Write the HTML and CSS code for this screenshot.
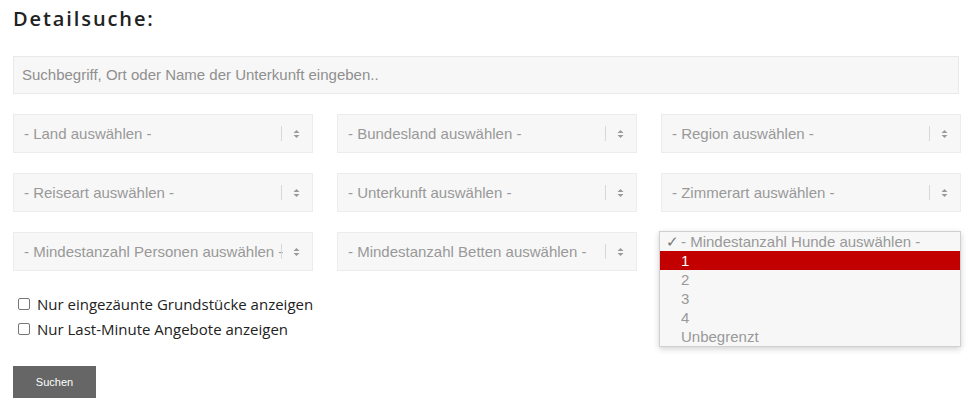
FILE: index.html
```html
<!DOCTYPE html>
<html lang="de">
<head>
<meta charset="utf-8">
<title>Detailsuche</title>
<link rel="stylesheet" href="styles.css">
</head>
<body>
<div class="page">
  <h2 class="title">Detailsuche:</h2>
  <div class="search">Suchbegriff, Ort oder Name der Unterkunft eingeben..</div>
  <div class="grid">
    <div class="sel"><span class="lbl">- Land auswählen -</span><span class="arrow"><i class="sep"></i><svg width="7" height="10" viewBox="0 0 7 10"><path d="M0.5 4 L3.5 1 L6.5 4 Z M0.5 6 L3.5 9 L6.5 6 Z" fill="#9a9a9a"/></svg></span></div>
    <div class="sel"><span class="lbl">- Bundesland auswählen -</span><span class="arrow"><i class="sep"></i><svg width="7" height="10" viewBox="0 0 7 10"><path d="M0.5 4 L3.5 1 L6.5 4 Z M0.5 6 L3.5 9 L6.5 6 Z" fill="#9a9a9a"/></svg></span></div>
    <div class="sel"><span class="lbl">- Region auswählen -</span><span class="arrow"><i class="sep"></i><svg width="7" height="10" viewBox="0 0 7 10"><path d="M0.5 4 L3.5 1 L6.5 4 Z M0.5 6 L3.5 9 L6.5 6 Z" fill="#9a9a9a"/></svg></span></div>
    <div class="sel"><span class="lbl">- Reiseart auswählen -</span><span class="arrow"><i class="sep"></i><svg width="7" height="10" viewBox="0 0 7 10"><path d="M0.5 4 L3.5 1 L6.5 4 Z M0.5 6 L3.5 9 L6.5 6 Z" fill="#9a9a9a"/></svg></span></div>
    <div class="sel"><span class="lbl">- Unterkunft auswählen -</span><span class="arrow"><i class="sep"></i><svg width="7" height="10" viewBox="0 0 7 10"><path d="M0.5 4 L3.5 1 L6.5 4 Z M0.5 6 L3.5 9 L6.5 6 Z" fill="#9a9a9a"/></svg></span></div>
    <div class="sel"><span class="lbl">- Zimmerart auswählen -</span><span class="arrow"><i class="sep"></i><svg width="7" height="10" viewBox="0 0 7 10"><path d="M0.5 4 L3.5 1 L6.5 4 Z M0.5 6 L3.5 9 L6.5 6 Z" fill="#9a9a9a"/></svg></span></div>
    <div class="sel"><span class="lbl">- Mindestanzahl Personen auswählen -</span><span class="arrow"><i class="sep"></i><svg width="7" height="10" viewBox="0 0 7 10"><path d="M0.5 4 L3.5 1 L6.5 4 Z M0.5 6 L3.5 9 L6.5 6 Z" fill="#9a9a9a"/></svg></span></div>
    <div class="sel"><span class="lbl">- Mindestanzahl Betten auswählen -</span><span class="arrow"><i class="sep"></i><svg width="7" height="10" viewBox="0 0 7 10"><path d="M0.5 4 L3.5 1 L6.5 4 Z M0.5 6 L3.5 9 L6.5 6 Z" fill="#9a9a9a"/></svg></span></div>
    <div class="sel open">
      <span class="lbl hidden">- Mindestanzahl Hunde auswählen -</span>
      <ul class="menu">
        <li class="opt checked"><span class="chk">✓</span>- Mindestanzahl Hunde auswählen -</li>
        <li class="opt active">1</li>
        <li class="opt">2</li>
        <li class="opt">3</li>
        <li class="opt">4</li>
        <li class="opt">Unbegrenzt</li>
      </ul>
    </div>
  </div>
  <div class="checks">
    <label class="check"><span class="box"></span>Nur eingezäunte Grundstücke anzeigen</label>
    <label class="check"><span class="box"></span>Nur Last-Minute Angebote anzeigen</label>
  </div>
  <button class="btn">Suchen</button>
</div>
</body>
</html>
```
FILE: styles.css
```css
html, body {
  margin: 0;
  padding: 0;
  background: #fff;
}
.page {
  padding: 0 12px 0 13px;
  font-family: "Open Sans", sans-serif;
}
.title {
  margin: 0;
  padding-top: 4px;
  height: 52px;
  font-family: "Open Sans", sans-serif;
  font-weight: 600;
  font-size: 20px;
  letter-spacing: 1.9px;
  color: #222;
  line-height: 30px;
}
.search {
  box-sizing: border-box;
  width: 946px;
  height: 38px;
  background: #f7f7f7;
  border: 1px solid #e9e9e9;
  padding-left: 8px;
  font-family: "Liberation Sans", Arial, sans-serif;
  font-size: 15px;
  line-height: 36px;
  color: #8f8f8f;
}
.grid {
  margin-top: 20px;
  display: grid;
  grid-template-columns: 300px 300px 300px;
  column-gap: 24px;
  row-gap: 20px;
}
.sel {
  position: relative;
  box-sizing: border-box;
  height: 39px;
  background: #f7f7f7;
  border: 1px solid #ececec;
  display: flex;
  align-items: center;
  padding-left: 10px;
  padding-right: 12px;
  font-family: "Liberation Sans", Arial, sans-serif;
  font-size: 15px;
  color: #999;
}
.lbl {
  flex: 1;
  min-width: 0;
  white-space: nowrap;
  overflow: hidden;
}
.lbl.hidden {
  visibility: hidden;
}
.arrow {
  position: absolute;
  right: 12px;
  top: 0;
  bottom: 0;
  display: flex;
  align-items: center;
}
.sep {
  display: block;
  width: 1px;
  height: 15px;
  background: #d8d8d8;
  margin-right: 11px;
}
.menu {
  position: absolute;
  left: -3px;
  top: -2px;
  width: 302px;
  box-sizing: border-box;
  margin: 0;
  padding: 0;
  list-style: none;
  background: #f7f7f7;
  border: 1px solid #d0d0d0;
  box-shadow: 0 2px 6px rgba(0,0,0,0.18);
  z-index: 5;
}
.opt {
  height: 19px;
  line-height: 19px;
  padding-left: 21px;
  position: relative;
  font-family: "Liberation Sans", Arial, sans-serif;
  font-size: 15px;
  color: #999;
}
.opt.active {
  background: #c20000;
  color: #fff;
}
.chk {
  position: absolute;
  left: 6px;
  top: 0;
  color: #777;
}
.checks {
  margin-top: 20px;
  display: flex;
  flex-direction: column;
}
.check {
  display: flex;
  align-items: center;
  height: 25px;
  font-family: "Open Sans", sans-serif;
  font-size: 15px;
  color: #222;
}
.box {
  box-sizing: border-box;
  width: 12px;
  height: 12px;
  border: 1px solid #767676;
  border-radius: 2px;
  margin-left: 5px;
  margin-right: 7px;
  background: #fff;
}
.btn {
  margin-top: 25px;
  width: 83px;
  height: 32px;
  border: 0;
  background: #666;
  color: #fff;
  font-family: "Liberation Sans", Arial, sans-serif;
  font-size: 11px;
  padding: 0;
}
```
